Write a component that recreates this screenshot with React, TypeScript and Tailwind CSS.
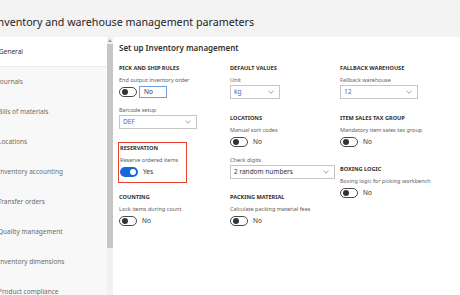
import type { ReactNode } from "react";

const navItems = [
  "Journals",
  "Bills of materials",
  "Locations",
  "Inventory accounting",
  "Transfer orders",
  "Quality management",
  "Inventory dimensions",
  "Product compliance",
];

function SectionHeader({ children, className = "" }: { children: ReactNode; className?: string }) {
  return (
    <div className={`h-[10px] whitespace-nowrap text-[5.6px] font-bold leading-[10px] text-[#323130] ${className}`}>
      {children}
    </div>
  );
}

function FieldLabel({ children }: { children: ReactNode }) {
  return (
    <div className="mt-[2px] h-[10px] whitespace-nowrap text-[5.5px] leading-[10px] text-[#5f5d5b]">{children}</div>
  );
}

function Toggle({ on = false }: { on?: boolean }) {
  if (on) {
    return (
      <span className="flex h-[10px] w-[18px] shrink-0 items-center justify-end rounded-full bg-[#1667d9] pr-[2px]">
        <span className="h-[6px] w-[6px] rounded-full bg-white" />
      </span>
    );
  }
  return (
    <span className="flex h-[10px] w-[18px] shrink-0 items-center rounded-full border border-[#4a4a4a] bg-white pl-[2px]">
      <span className="h-[6px] w-[6px] rounded-full bg-[#333333]" />
    </span>
  );
}

function ToggleRow({ on = false, text }: { on?: boolean; text: string }) {
  return (
    <div className="flex h-[14px] items-center gap-[5px]">
      <Toggle on={on} />
      <span className="text-[6.5px] text-[#323130]">{text}</span>
    </div>
  );
}

function Chevron() {
  return (
    <svg width="6" height="4" viewBox="0 0 6 4" fill="none">
      <path d="M0.5 0.8L3 3.2L5.5 0.8" stroke="#777" strokeWidth="0.7" />
    </svg>
  );
}

function Select({ value, width, accent = true }: { value: string; width: string; accent?: boolean }) {
  return (
    <div
      className={`flex h-[14px] items-center justify-between border border-[#c8c6c4] bg-white pl-[3px] pr-[5px] ${width}`}
    >
      <span className={`text-[6.5px] ${accent ? "text-[#2a6fd6]" : "text-[#323130]"}`}>{value}</span>
      <Chevron />
    </div>
  );
}

export default function App() {
  return (
    <div
      className="h-[295px] w-[460px] overflow-hidden bg-white"
      style={{ fontFamily: '"Noto Sans", "Open Sans", Arial, sans-serif' }}
    >
      <header className="flex h-[37px] items-center bg-[#f3f3f3] pt-[8px]">
        <h1 className="ml-[-6px] whitespace-nowrap text-[10.7px] text-[#252423]">
          Inventory and warehouse management parameters
        </h1>
      </header>

      <div className="flex h-[258px]">
        <nav className="w-[107px] shrink-0 bg-[#f8f8f8]">
          <div className="flex h-[30px] items-center border-b border-[#ececec] bg-white">
            <span className="ml-[-1px] text-[6.5px] text-[#323130]">General</span>
          </div>
          {navItems.map((item) => (
            <div key={item} className="flex h-[30px] items-center">
              <span className="ml-[-2px] whitespace-nowrap text-[6.5px] text-[#6d6b69]">{item}</span>
            </div>
          ))}
        </nav>

        <div className="flex w-[6px] shrink-0 flex-col bg-[#f1f1f1]">
          <div className="flex h-[7px] items-center justify-center">
            <svg width="4" height="3" viewBox="0 0 4 3">
              <path d="M2 0L4 3H0Z" fill="#a0a0a0" />
            </svg>
          </div>
          <div className="h-[204px] bg-[#c6c6c6]" />
        </div>

        <main className="min-w-0 flex-1 pl-[6px] pt-[4px]">
          <h2 className="h-[14px] whitespace-nowrap text-[8px] font-semibold leading-[14px] text-[#323130]">
            Set up Inventory management
          </h2>

          <div className="mt-[8px] grid grid-cols-[111px_110px_1fr]">
            <div className="flex flex-col">
              <SectionHeader>PICK AND SHIP RULES</SectionHeader>
              <FieldLabel>End output inventory order</FieldLabel>
              <div className="flex h-[14px] items-center gap-[2px]">
                <Toggle />
                <div className="flex h-[12px] w-[28px] items-center border border-[#6c9fdc] pl-[4px] text-[6.5px] text-[#323130]">
                  No
                </div>
              </div>
              <div className="mt-[4px]">
                <FieldLabel>Barcode setup</FieldLabel>
              </div>
              <Select value="DEF" width="w-[78px]" />

              <div className="mt-[13px] ml-[-1px] w-[69px] border-[1.5px] border-[#e8412f] pb-[3px] pl-[1px]">
                <SectionHeader>RESERVATION</SectionHeader>
                <FieldLabel>Reserve ordered items</FieldLabel>
                <ToggleRow on text="Yes" />
              </div>

              <SectionHeader className="mt-[9px]">COUNTING</SectionHeader>
              <FieldLabel>Lock items during count</FieldLabel>
              <ToggleRow text="No" />
            </div>

            <div className="flex flex-col">
              <SectionHeader>DEFAULT VALUES</SectionHeader>
              <FieldLabel>Unit</FieldLabel>
              <Select value="kg" width="w-[50px]" />

              <SectionHeader className="mt-[14px]">LOCATIONS</SectionHeader>
              <FieldLabel>Manual sort codes</FieldLabel>
              <ToggleRow text="No" />

              <div className="mt-[4px]">
                <FieldLabel>Check digits</FieldLabel>
              </div>
              <Select value="2 random numbers" width="w-[105px]" accent={false} />

              <SectionHeader className="mt-[13px]">PACKING MATERIAL</SectionHeader>
              <FieldLabel>Calculate packing material fees</FieldLabel>
              <ToggleRow text="No" />
            </div>

            <div className="flex flex-col">
              <SectionHeader>FALLBACK WAREHOUSE</SectionHeader>
              <FieldLabel>Fallback warehouse</FieldLabel>
              <Select value="12" width="w-[78px]" />

              <SectionHeader className="mt-[14px]">ITEM SALES TAX GROUP</SectionHeader>
              <FieldLabel>Mandatory item sales tax group</FieldLabel>
              <ToggleRow text="No" />

              <SectionHeader className="mt-[15px]">BOXING LOGIC</SectionHeader>
              <FieldLabel>Boxing logic for picking workbench</FieldLabel>
              <ToggleRow text="No" />
            </div>
          </div>
        </main>
      </div>
    </div>
  );
}
